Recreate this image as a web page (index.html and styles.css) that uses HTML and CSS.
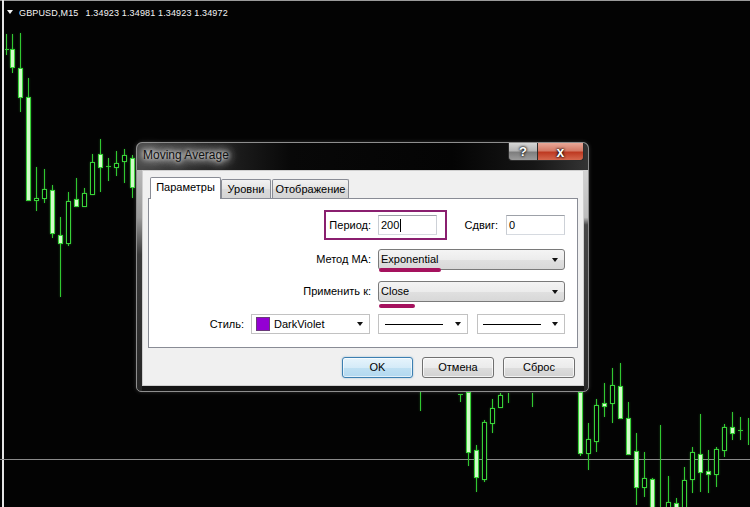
FILE: index.html
```html
<!DOCTYPE html>
<html lang="ru">
<head>
<meta charset="utf-8">
<title>Moving Average</title>
<link rel="stylesheet" href="styles.css">
</head>
<body>
<div class="chart">
  <svg class="candles" width="750" height="507" viewBox="0 0 750 507">
    <rect x="0" y="0" width="750" height="1" fill="#9a9a9a"/>
    <rect x="2" y="0" width="2" height="507" fill="#e4e4e4"/>
    <line class="grid" x1="0" y1="459.5" x2="750" y2="459.5"/>
    <g class="cs">
      <line class="w" x1="6.5" y1="34" x2="6.5" y2="55"/><line class="w" x1="5" y1="49.5" x2="9" y2="49.5"/>
      <line class="w" x1="12.5" y1="34" x2="12.5" y2="73"/><rect class="f" x="10.5" y="49.5" width="4" height="18"/>
      <line class="w" x1="20.5" y1="33" x2="20.5" y2="112"/><rect class="f" x="18.5" y="68.5" width="4" height="29"/>
      <line class="w" x1="28.5" y1="78" x2="28.5" y2="200"/><rect class="f" x="26.5" y="97.5" width="4" height="103"/>
      <line class="w" x1="36.5" y1="167" x2="36.5" y2="211"/><rect class="h" x="34.5" y="198.5" width="4" height="2"/>
      <line class="w" x1="44.5" y1="169" x2="44.5" y2="203"/><rect class="h" x="42.5" y="189.5" width="4" height="9"/>
      <line class="w" x1="52.5" y1="185" x2="52.5" y2="238"/><rect class="f" x="50.5" y="190.5" width="4" height="43"/>
      <line class="w" x1="60.5" y1="217" x2="60.5" y2="297"/><rect class="f" x="58.5" y="235.5" width="4" height="8"/>
      <line class="w" x1="68.5" y1="192" x2="68.5" y2="246"/><rect class="h" x="66.5" y="201.5" width="4" height="42"/>
      <line class="w" x1="76.5" y1="178" x2="76.5" y2="207"/><rect class="f" x="74.5" y="199.5" width="4" height="7"/>
      <line class="w" x1="84.5" y1="188" x2="84.5" y2="206"/><rect class="h" x="82.5" y="193.5" width="4" height="13"/>
      <line class="w" x1="92.5" y1="154" x2="92.5" y2="195"/><rect class="h" x="90.5" y="162.5" width="4" height="32"/>
      <line class="w" x1="100.5" y1="139" x2="100.5" y2="192"/><rect class="f" x="98.5" y="154.5" width="4" height="13"/>
      <line class="w" x1="108.5" y1="158" x2="108.5" y2="181"/><line class="w" x1="106" y1="166.5" x2="111" y2="166.5"/>
      <line class="w" x1="116.5" y1="151" x2="116.5" y2="176"/><rect class="h" x="114.5" y="163.5" width="4" height="4"/>
      <line class="w" x1="124.5" y1="149" x2="124.5" y2="183"/><rect class="h" x="122.5" y="155.5" width="4" height="6"/>
      <line class="w" x1="132.5" y1="155" x2="132.5" y2="198"/><rect class="f" x="130.5" y="158.5" width="4" height="29"/>

      <line class="w" x1="420.5" y1="392" x2="420.5" y2="411"/>
      <line class="w" x1="460.5" y1="394" x2="460.5" y2="402"/><line class="w" x1="458" y1="394.5" x2="463" y2="394.5"/>
      <line class="w" x1="468.5" y1="392" x2="468.5" y2="466"/><rect class="f" x="466.5" y="392.5" width="4" height="60"/>
      <line class="w" x1="476.5" y1="445" x2="476.5" y2="492"/><rect class="f" x="474.5" y="450.5" width="4" height="27"/>
      <line class="w" x1="484.5" y1="420" x2="484.5" y2="482"/><rect class="h" x="482.5" y="422.5" width="4" height="57"/>
      <line class="w" x1="492.5" y1="399" x2="492.5" y2="433"/><rect class="h" x="490.5" y="408.5" width="4" height="15"/>
      <line class="w" x1="500.5" y1="393" x2="500.5" y2="407"/><rect class="h" x="498.5" y="395.5" width="4" height="12"/>
      <line class="w" x1="508.5" y1="393" x2="508.5" y2="403"/>
      <line class="w" x1="532.5" y1="393" x2="532.5" y2="407"/>
      <line class="w" x1="580.5" y1="385" x2="580.5" y2="456"/><rect class="f" x="578.5" y="392.5" width="4" height="61"/>
      <line class="w" x1="588.5" y1="423" x2="588.5" y2="470"/><rect class="h" x="586.5" y="439.5" width="4" height="14"/>
      <line class="w" x1="596.5" y1="399" x2="596.5" y2="452"/><rect class="h" x="594.5" y="405.5" width="4" height="36"/>
      <line class="w" x1="604.5" y1="383" x2="604.5" y2="417"/><rect class="f" x="602.5" y="403.5" width="4" height="3"/>
      <line class="w" x1="612.5" y1="368" x2="612.5" y2="423"/><rect class="h" x="610.5" y="385.5" width="4" height="18"/>
      <line class="w" x1="620.5" y1="363" x2="620.5" y2="419"/><rect class="f" x="618.5" y="386.5" width="4" height="32"/>
      <line class="w" x1="628.5" y1="402" x2="628.5" y2="455"/><rect class="f" x="626.5" y="418.5" width="4" height="36"/>
      <line class="w" x1="636.5" y1="433" x2="636.5" y2="505"/><rect class="f" x="634.5" y="451.5" width="4" height="36"/>
      <line class="w" x1="644.5" y1="452" x2="644.5" y2="497"/><rect class="h" x="642.5" y="478.5" width="4" height="9"/>
      <line class="w" x1="652.5" y1="478" x2="652.5" y2="507"/><rect class="f" x="650.5" y="479.5" width="4" height="32"/>
      <line class="w" x1="660.5" y1="425" x2="660.5" y2="507"/>
      <line class="w" x1="668.5" y1="476" x2="668.5" y2="507"/><rect class="h" x="666.5" y="502.5" width="4" height="10"/>
      <line class="w" x1="676.5" y1="498" x2="676.5" y2="507"/><rect class="f" x="674.5" y="503.5" width="4" height="10"/>
      <line class="w" x1="684.5" y1="467" x2="684.5" y2="507"/><rect class="h" x="682.5" y="480.5" width="4" height="32"/>
      <line class="w" x1="692.5" y1="447" x2="692.5" y2="493"/><rect class="h" x="690.5" y="452.5" width="4" height="27"/>
      <line class="w" x1="700.5" y1="414" x2="700.5" y2="492"/><rect class="f" x="698.5" y="454.5" width="4" height="18"/>
      <line class="w" x1="708.5" y1="450" x2="708.5" y2="493"/><rect class="f" x="706.5" y="471.5" width="4" height="3"/>
      <line class="w" x1="716.5" y1="447" x2="716.5" y2="487"/><rect class="h" x="714.5" y="449.5" width="4" height="25"/>
      <line class="w" x1="724.5" y1="424" x2="724.5" y2="457"/><rect class="h" x="722.5" y="427.5" width="4" height="23"/>
      <line class="w" x1="732.5" y1="412" x2="732.5" y2="440"/><rect class="f" x="730.5" y="427.5" width="4" height="6"/>
      <line class="w" x1="740.5" y1="417" x2="740.5" y2="440"/><line class="w" x1="738" y1="430.5" x2="743" y2="430.5"/>
      <line class="w" x1="748.5" y1="418" x2="748.5" y2="445"/>
    </g>
  </svg>

  <div class="hdr"><span class="tri"></span><span class="sym">GBPUSD,M15</span><span class="px">1.34923 1.34981 1.34923 1.34972</span></div>

  <div class="dialog">
    <div class="titlebar">
      <div class="title">Moving Average</div>
      <div class="caps">
        <div class="cap cap-help">?</div>
        <div class="cap cap-close">x</div>
      </div>
    </div>
    <div class="client">
      <div class="tabs">
        <div class="tab tab-active">Параметры</div>
        <div class="tab tab-2">Уровни</div>
        <div class="tab tab-3">Отображение</div>
      </div>
      <div class="panel">
        <div class="row r1">
          <div class="hl">
            <span class="lbl">Период:</span>
            <div class="in">200<span class="caret"></span></div>
          </div>
          <div class="shift">
            <span class="lbl lbl-shift">Сдвиг:</span>
            <div class="in">0</div>
          </div>
        </div>
        <div class="row r2">
          <span class="lbl">Метод МА:</span>
          <div class="combo"><span>Exponential</span><span class="arrow"></span><span class="mark mark-exp"></span></div>
        </div>
        <div class="row r3">
          <span class="lbl">Применить к:</span>
          <div class="combo"><span>Close</span><span class="arrow"></span><span class="mark mark-close"></span></div>
        </div>
        <div class="row r4">
          <span class="lbl">Стиль:</span>
          <div class="sel sel-color"><span class="swatch"></span><span class="cname">DarkViolet</span><span class="arrow"></span></div>
          <div class="sel sel-line sel-l1"><span class="ln"></span><span class="arrow"></span></div>
          <div class="sel sel-line sel-l2"><span class="ln"></span><span class="arrow"></span></div>
        </div>
      </div>
      <div class="btns">
        <div class="btn btn-ok">OK</div>
        <div class="btn">Отмена</div>
        <div class="btn">Сброс</div>
      </div>
    </div>
  </div>
</div>
</body>
</html>
```
FILE: styles.css
```css
* { box-sizing: border-box; }
html, body { margin: 0; padding: 0; background: #000; }
body { width: 750px; height: 507px; overflow: hidden; }

.chart {
  position: relative;
  width: 750px;
  height: 507px;
  background: #030303;
  overflow: hidden;
}
.candles { position: absolute; left: 0; top: 0; }
.grid { stroke: #8a8a8a; stroke-width: 1; }
.cs { filter: drop-shadow(0 0 1px rgba(80, 255, 80, 0.35)); }
.w { stroke: #30c830; stroke-width: 1; }
.f { fill: #d2fbc9; stroke: #38d238; stroke-width: 1; }
.h { fill: #030303; stroke: #38d238; stroke-width: 1; }

.hdr {
  position: relative;
  display: flex;
  align-items: flex-start;
  height: 18px;
  padding: 7px 0 0 7px;
  font: 9px/12px "Liberation Sans", Arial, sans-serif;
  letter-spacing: 0.15px;
  color: #f4f4f4;
}
.tri {
  width: 0; height: 0;
  border-left: 3px solid transparent;
  border-right: 3px solid transparent;
  border-top: 4px solid #f4f4f4;
  margin: 3px 6px 0 0;
}
.sym { margin-right: 7px; }

.dialog {
  position: absolute;
  left: 136px;
  top: 142px;
  width: 453px;
  height: 250px;
  border: 1px solid #8e8e8e;
  border-radius: 6px 6px 5px 5px;
  display: flex;
  flex-direction: column;
  background:
    linear-gradient(to bottom, #c8c8c8 0%, #9a9a9a 30%, #3a3a3a 45%, #262626 100%) left top / 5px 100% no-repeat,
    linear-gradient(to bottom, #e0e0e0 0%, #bcbcbc 30%, #484848 33%, #2a2a2a 100%) right top / 4px 100% no-repeat,
    #141414;
  box-shadow: 0 0 4px rgba(255, 255, 255, 0.18);
}
.titlebar {
  height: 27px;
  display: flex;
  justify-content: space-between;
  align-items: flex-start;
  padding-left: 6px;
  border-radius: 5px 5px 0 0;
  background: linear-gradient(90deg, #484848 0%, #262626 16%, #080808 34%, #040404 70%, #161616 88%, #343434 100%);
}
.title {
  font: 12px/15px "Liberation Sans", Arial, sans-serif;
  padding-top: 5px;
  color: #111;
  text-shadow: 0 0 4px #fff, 0 0 8px #f2f2f2, 0 0 12px rgba(255, 255, 255, 0.9), 0 0 18px rgba(255, 255, 255, 0.6);
}
.caps { display: flex; margin-right: 4px; }
.cap {
  height: 18px;
  border: 1px solid #2c2c2c;
  border-top: 0;
  display: flex;
  align-items: center;
  justify-content: center;
  font: bold 13px/1 "Liberation Sans", Arial, sans-serif;
  color: #fff;
  text-shadow: 0 0 2px #000, 0 0 3px #000;
}
.cap-help {
  width: 29px;
  border-right: 0;
  border-radius: 0 0 0 4px;
  background: linear-gradient(#d6d6d6 0%, #b5b5b5 45%, #7e7e7e 55%, #9c9c9c 100%);
}
.cap-close {
  width: 47px;
  border-radius: 0 0 4px 0;
  font-size: 14px;
  background: linear-gradient(#e9a898 0%, #d47a66 45%, #be3a22 55%, #d5684e 100%);
}

.client {
  flex: 1;
  margin: 0 4px 5px 5px;
  border: 1px solid #cfcfcf;
  background: #f0f0f0;
  padding: 6px 5px 0 5px;
  display: flex;
  flex-direction: column;
  font: 11px/13px "Liberation Sans", Arial, sans-serif;
  color: #000;
}
.tabs {
  display: flex;
  align-items: flex-end;
  height: 21px;
  padding-left: 2px;
  position: relative;
  z-index: 1;
}
.tab {
  height: 19px;
  border: 1px solid #898c95;
  border-bottom: 0;
  display: flex;
  align-items: center;
  justify-content: center;
  background: linear-gradient(#f2f2f2, #e4e4e4 50%, #dadada 51%, #d5d5d5);
  border-radius: 2px 2px 0 0;
}
.tab-active {
  width: 71px;
  height: 22px;
  margin-bottom: -1px;
  background: #fff;
  padding-bottom: 2px;
}
.tab-2 { width: 50px; margin-left: 0; }
.tab-3 { width: 77px; margin-left: 1px; }

.panel {
  height: 150px;
  border: 1px solid #898c95;
  background: #fff;
  padding: 11px 12px 0 0;
  display: flex;
  flex-direction: column;
  align-items: flex-end;
}
.row { display: flex; align-items: center; }
.r1 { height: 30px; }
.r2 { height: 21px; margin-top: 9px; }
.r3 { height: 21px; margin-top: 11px; }
.r4 { height: 20px; margin-top: 12px; }
.lbl { margin-right: 7px; }
.lbl-shift { margin-right: 8px; }

.hl {
  width: 123px;
  height: 30px;
  border: 2px solid #8a1f6f;
  display: flex;
  align-items: center;
  justify-content: flex-end;
  padding-right: 8px;
}
.shift {
  width: 118px;
  display: flex;
  align-items: center;
  justify-content: flex-end;
}
.in {
  width: 59px;
  height: 20px;
  border: 1px solid #abadb3;
  border-color: #9da1a8 #cdd1d7 #d6dae0 #c8ccd2;
  background: #fff;
  padding-left: 2px;
  display: flex;
  align-items: center;
}
.caret { width: 1px; height: 13px; background: #000; margin-left: 1px; }

.combo {
  position: relative;
  width: 187px;
  height: 21px;
  border: 1px solid #7a7a7a;
  border-radius: 3px;
  background: linear-gradient(#f4f4f4 0%, #ececec 50%, #e0e0e0 51%, #d8d8d8 100%);
  display: flex;
  align-items: center;
  justify-content: space-between;
  padding: 0 6px 0 2px;
}
.arrow {
  width: 0; height: 0;
  border-left: 3px solid transparent;
  border-right: 3px solid transparent;
  border-top: 4px solid #111;
}
.mark {
  position: absolute;
  left: 0;
  height: 4px;
  border-radius: 2px;
  background: #a5125e;
}
.mark-exp { top: 18px; width: 62px; }
.mark-close { top: 22px; width: 36px; }

.sel {
  height: 20px;
  border: 1px solid #c2c2c2;
  background: #fff;
  display: flex;
  align-items: center;
  padding: 0 6px 0 4px;
}
.sel-color { width: 119px; }
.swatch {
  width: 14px;
  height: 14px;
  background: #9400d3;
  border: 1px solid #6a3a7a;
  margin-right: 4px;
}
.cname { flex: 1; }
.sel-line { justify-content: space-between; padding: 0 6px 0 6px; }
.sel-l1 { width: 90px; margin-left: 8px; }
.sel-l2 { width: 88px; margin-left: 9px; padding-left: 5px; }
.ln { width: 58px; height: 1px; background: #000; }

.btns {
  display: flex;
  justify-content: flex-end;
  gap: 9px;
  margin-top: 9px;
  padding-right: 3px;
}
.btn {
  width: 72px;
  height: 21px;
  border: 1px solid #707070;
  border-radius: 3px;
  background: linear-gradient(#f3f3f3 0%, #ebebeb 50%, #dddddd 51%, #d2d2d2 100%);
  display: flex;
  align-items: center;
  justify-content: center;
  box-shadow: inset 0 0 0 1px rgba(255, 255, 255, 0.7);
}
.btn-ok {
  width: 71px;
  border-color: #3c7fb1;
  background: linear-gradient(#e6f4fc 0%, #d5ebf8 50%, #bfe0f3 51%, #b2d8ef 100%);
  box-shadow: inset 0 0 0 1px rgba(255, 255, 255, 0.6), 0 0 2px rgba(60, 127, 177, 0.5);
}
```
